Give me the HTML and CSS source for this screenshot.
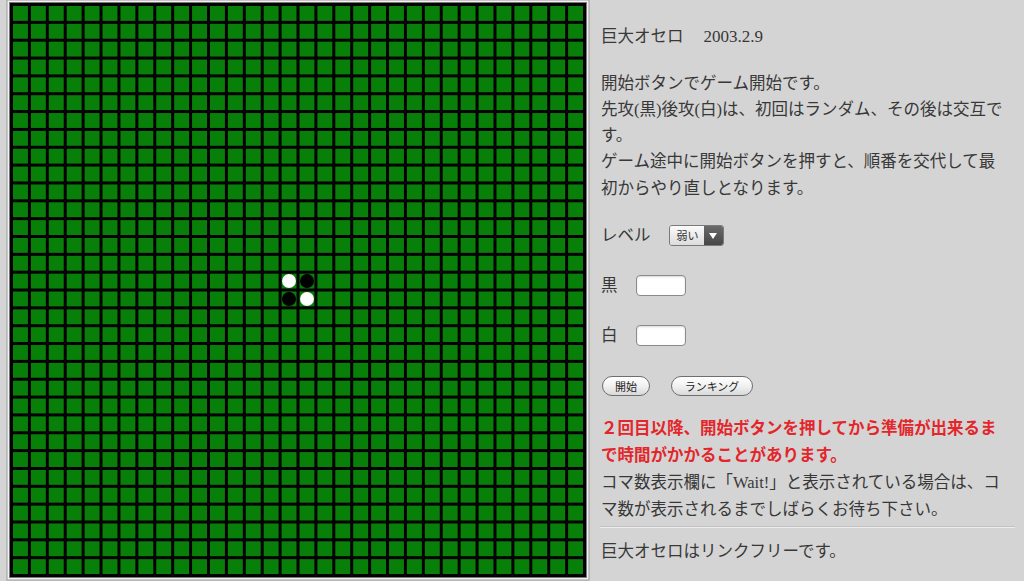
FILE: index.html
```html
<!DOCTYPE html>
<html lang="ja">
<head>
<meta charset="utf-8">
<title>巨大オセロ</title>
<link rel="stylesheet" href="styles.css">
</head>
<body>
<div class="page">
  <div class="board-frame">
    <div class="board">
      <div class="stone white r16 c16"></div>
      <div class="stone black r16 c17"></div>
      <div class="stone black r17 c16"></div>
      <div class="stone white r17 c17"></div>
    </div>
  </div>
  <div class="side">
    <p class="title">巨大オセロ<span class="date">2003.2.9</span></p>
    <p class="intro">開始ボタンでゲーム開始です。<br>先攻(黒)後攻(白)は、初回はランダム、その後は交互です。<br>ゲーム途中に開始ボタンを押すと、順番を交代して最初からやり直しとなります。</p>
    <div class="row">
      <span class="label">レベル</span>
      <div class="select">
        <span class="select-value">弱い</span>
        <span class="select-arrow"><svg width="8" height="6" viewBox="0 0 8 6"><path d="M0 0 L8 0 L4 6 Z" fill="#fff"/></svg></span>
      </div>
    </div>
    <div class="row">
      <span class="label">黒</span>
      <input class="count" type="text">
    </div>
    <div class="row">
      <span class="label">白</span>
      <input class="count" type="text">
    </div>
    <div class="row buttons">
      <button class="btn btn-start">開始</button>
      <button class="btn btn-rank">ランキング</button>
    </div>
    <p class="notice"><strong class="warn">２回目以降、開始ボタンを押してから準備が出来るまで時間がかかることがあります。</strong><br>コマ数表示欄に「Wait!」と表示されている場合は、コマ数が表示されるまでしばらくお待ち下さい。</p>
    <hr class="divider">
    <p class="footer">巨大オセロはリンクフリーです。</p>
  </div>
</div>
</body>
</html>
```

FILE: styles.css
```css
html, body {
  margin: 0;
  padding: 0;
}

body {
  background: #d4d4d4;
  color: #383838;
  font-family: "Liberation Serif", "Noto Sans CJK JP", serif;
  font-size: 16.5px;
  width: 1024px;
  height: 581px;
  overflow: hidden;
}

.page {
  display: flex;
  align-items: flex-start;
}

.board-frame {
  margin: 3px 0 0 10px;
  box-shadow: 0 0 0 1px #777, 0 0 0 2.5px #f2f2f2, 0 0 0 3.5px #9a9a9a;
}

.board {
  width: 576px;
  height: 574px;
  box-sizing: border-box;
  padding: 3px;
  background-color: #000;
  background-image:
    linear-gradient(to bottom, transparent 14.84375px, #000 14.84375px),
    linear-gradient(to right, #087f08 14.90625px, #000 14.90625px);
  background-size: 17.90625px 17.84375px;
  background-origin: content-box;
  display: grid;
  grid-template-columns: repeat(32, 14.90625px);
  grid-template-rows: repeat(32, 14.84375px);
  gap: 3px;
}

.stone {
  border-radius: 50%;
  margin: 0.5px;
}

.stone.white {
  background: radial-gradient(circle at 50% 45%, #ffffff 55%, #e6e6e6 80%, #9a9a9a 100%);
}

.stone.black {
  background: radial-gradient(circle at 50% 45%, #000 70%, #111 100%);
}

.r16 { grid-row: 16; }
.r17 { grid-row: 17; }
.c16 { grid-column: 16; }
.c17 { grid-column: 17; }

.side {
  margin-left: 15px;
  width: 415px;
  padding-top: 24px;
}

.side p {
  margin: 0;
}

.title {
  line-height: 26.5px;
}

.date {
  margin-left: 20px;
  font-size: 17px;
}

.intro {
  margin-top: 20px !important;
  width: 408px;
  line-height: 26.25px;
}

.row {
  height: 50px;
  display: flex;
  align-items: center;
  gap: 18px;
}

.intro + .row {
  margin-top: 9px;
}

.label {
  line-height: 1;
}

.select {
  display: flex;
  width: 55px;
  height: 21px;
  box-sizing: border-box;
  border: 1px solid #7a7a7a;
  border-radius: 3px;
  overflow: hidden;
}

.select-value {
  flex: 1;
  background: linear-gradient(#fbfbfb, #dcdcdc);
  font-family: "Noto Sans CJK JP", sans-serif;
  font-size: 11px;
  line-height: 19px;
  padding-left: 7px;
  color: #333;
}

.select-arrow {
  width: 19px;
  background: linear-gradient(#6a6a6a, #474747);
  display: flex;
  align-items: center;
  justify-content: center;
}

.count {
  width: 50px;
  height: 21px;
  box-sizing: border-box;
  border: 1px solid #8a8a8a;
  border-radius: 4px;
  background: #fff;
  box-shadow: inset 0 1px 2px rgba(0,0,0,0.15);
  padding: 0;
  margin: 0;
}

.buttons {
  gap: 21px;
  padding-left: 1px;
}

.btn {
  height: 20px;
  box-sizing: border-box;
  border: 1px solid #6e6e6e;
  border-radius: 10px;
  background: linear-gradient(#ffffff, #f1f1f1 50%, #d9d9d9);
  font-family: "Noto Sans CJK JP", sans-serif;
  font-size: 11px;
  line-height: 16px;
  color: #222;
  padding: 0;
  margin: 0;
}

.btn-start {
  width: 48px;
}

.btn-rank {
  width: 82px;
}

.notice {
  margin-top: 4.5px !important;
  width: 408px;
  line-height: 27px;
}

.warn {
  color: #e3262b;
  font-weight: 700;
}

.divider {
  margin: 3px 0 0 -1px;
  width: 415px;
  height: 0;
  border: 0;
  border-top: 1px solid #c2c2c2;
  border-bottom: 1px solid #ededed;
}

.footer {
  margin-top: 10px !important;
  line-height: 27px;
}
```
